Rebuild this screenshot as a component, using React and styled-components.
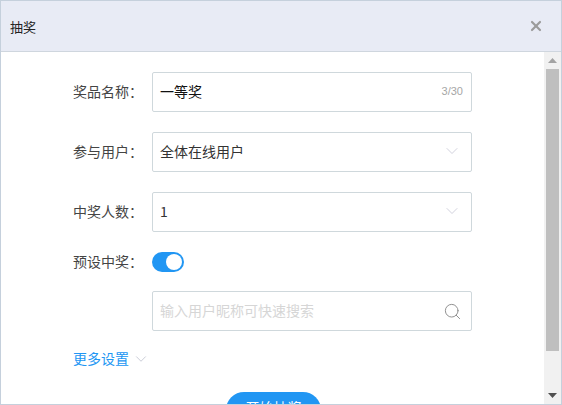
import React from "react";
import styled, { createGlobalStyle } from "styled-components";
import { ChevronDown, Search, X } from "lucide-react";

const GlobalStyle = createGlobalStyle`
  html, body {
    margin: 0;
    padding: 0;
    height: 100%;
    overflow: hidden;
    background: #fff;
  }
  * {
    box-sizing: border-box;
  }
`;

export default function App() {
  return (
    <>
      <GlobalStyle />
      <Dialog>
        <Header>
          <Title>抽奖</Title>
          <CloseButton>
            <X size={16} strokeWidth={3.2} />
          </CloseButton>
        </Header>
        <Content>
          <Form>
            <Row>
              <Label>奖品名称：</Label>
              <Field>
                <Value $strong>一等奖</Value>
                <Counter>3/30</Counter>
              </Field>
            </Row>
            <Row>
              <Label>参与用户：</Label>
              <Field>
                <Value>全体在线用户</Value>
                <Caret>
                  <ChevronDown size={20} strokeWidth={1} />
                </Caret>
              </Field>
            </Row>
            <Row>
              <Label>中奖人数：</Label>
              <Field>
                <Value>1</Value>
                <Caret>
                  <ChevronDown size={20} strokeWidth={1} />
                </Caret>
              </Field>
            </Row>
            <SwitchRow>
              <Label>预设中奖：</Label>
              <Switch>
                <Knob />
              </Switch>
            </SwitchRow>
            <SearchRow>
              <Field>
                <Placeholder>输入用户昵称可快速搜索</Placeholder>
                <SearchIcon>
                  <Search size={19} strokeWidth={1.2} />
                </SearchIcon>
              </Field>
            </SearchRow>
            <MoreRow>
              <MoreLink>更多设置</MoreLink>
              <ChevronDown size={18} strokeWidth={1.2} color="#c4c7d2" />
            </MoreRow>
            <Actions>
              <StartButton>开始抽奖</StartButton>
            </Actions>
          </Form>
          <Scrollbar>
            <ScrollArrow>
              <svg width="9" height="5" viewBox="0 0 9 5">
                <path d="M4.5 0 L9 5 L0 5 Z" fill="#a3a3a3" />
              </svg>
            </ScrollArrow>
            <ThumbTrack>
              <Thumb />
            </ThumbTrack>
            <ScrollArrow>
              <svg width="9" height="5" viewBox="0 0 9 5">
                <path d="M0 0 L9 0 L4.5 5 Z" fill="#505050" />
              </svg>
            </ScrollArrow>
          </Scrollbar>
        </Content>
      </Dialog>
    </>
  );
}

const Dialog = styled.div`
  width: 562px;
  height: 405px;
  display: flex;
  flex-direction: column;
  border: 1px solid #c5d0dc;
  background: #fff;
  overflow: hidden;
  font-family: "Noto Sans CJK SC", "Liberation Sans", sans-serif;
  font-size: 14px;
  color: #333;
`;

const Header = styled.div`
  height: 51px;
  flex: none;
  display: flex;
  align-items: center;
  justify-content: space-between;
  padding: 0 17px 0 9px;
  background: #e8ebf5;
  border-bottom: 1px solid #cfd6de;
`;

const Title = styled.div`
  font-size: 13px;
  color: #222;
`;

const CloseButton = styled.div`
  display: flex;
  margin-top: -1px;
  color: #9b9b9b;
`;

const Content = styled.div`
  flex: 1;
  min-height: 0;
  display: flex;
`;

const Form = styled.div`
  flex: 1;
  min-width: 0;
  padding: 20px 0 0 72px;
  display: flex;
  flex-direction: column;
  overflow: hidden;
`;

const Row = styled.div`
  flex: none;
  display: flex;
  align-items: center;
  height: 40px;
  margin-bottom: 20px;
`;

const SwitchRow = styled(Row)`
  height: 20px;
  margin-bottom: 19px;
`;

const SearchRow = styled(Row)`
  padding-left: 79px;
  margin-bottom: 16px;
`;

const Label = styled.div`
  width: 79px;
  flex: none;
  margin-top: -2px;
  color: #444;
`;

const Field = styled.div`
  width: 320px;
  height: 40px;
  display: flex;
  align-items: center;
  justify-content: space-between;
  padding: 0 9px 2px 7px;
  border: 1px solid #cfd8dc;
  border-radius: 2px;
  background: #fff;
`;

const Value = styled.span`
  color: ${(props) => (props.$strong ? "#111" : "#333")};
`;

const Counter = styled.span`
  font-family: "Liberation Sans", sans-serif;
  font-size: 11px;
  color: #a6a6a6;
  margin-right: -1px;
`;

const Caret = styled.span`
  display: flex;
  color: #c9c9d6;
`;

const Switch = styled.div`
  width: 32px;
  height: 20px;
  display: flex;
  align-items: center;
  justify-content: flex-end;
  padding-right: 2px;
  border-radius: 10px;
  background: #2196f3;
`;

const Knob = styled.div`
  width: 16px;
  height: 16px;
  border-radius: 50%;
  background: #fff;
`;

const Placeholder = styled.span`
  color: #d6d6d6;
`;

const SearchIcon = styled.span`
  display: flex;
  margin-top: 2px;
  color: #8c8c8c;
`;

const MoreRow = styled.div`
  flex: none;
  height: 24px;
  display: flex;
  align-items: center;
  gap: 3px;
`;

const MoreLink = styled.span`
  margin-top: -2px;
  color: #2196f3;
`;

const Actions = styled.div`
  flex: none;
  margin-top: 21px;
  padding-left: 153px;
`;

const StartButton = styled.div`
  width: 95px;
  height: 30px;
  display: flex;
  align-items: center;
  justify-content: center;
  border-radius: 18px 18px 0 0;
  background: #2196f3;
  color: #fff;
`;

const Scrollbar = styled.div`
  width: 17px;
  flex: none;
  display: flex;
  flex-direction: column;
  background: #f1f1f1;
`;

const ScrollArrow = styled.div`
  height: 17px;
  flex: none;
  display: flex;
  align-items: center;
  justify-content: center;
`;

const ThumbTrack = styled.div`
  flex: 1;
  min-height: 0;
`;

const Thumb = styled.div`
  width: 13px;
  height: 282px;
  margin-left: 2px;
  background: #bfbfbf;
`;
